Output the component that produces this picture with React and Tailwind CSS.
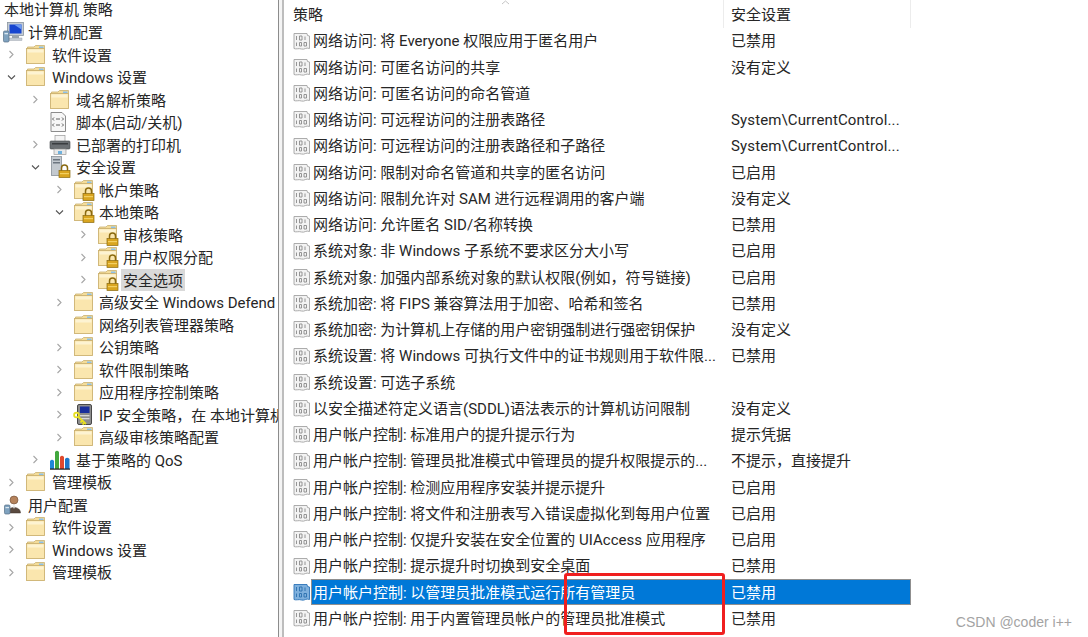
import React from "react";

function Chevron({ open }) {
  return (
    <svg width="9" height="9" viewBox="0 0 9 9" className="shrink-0" fill="none" stroke={open ? "#555" : "#a6a6a6"} strokeWidth="1.1">
      {open ? <path d="M1 2.5 L4.5 6 L8 2.5" /> : <path d="M2.5 1 L6 4.5 L2.5 8" />}
    </svg>
  );
}

function Folder({ lock }) {
  return (
    <svg width="22" height="22" viewBox="0 0 22 22" className="shrink-0 overflow-visible">
      <path d="M2.5 5 V3 H9 L10.5 1.5 H19.5 V5 Z" fill="#f3dc9a" stroke="#c9b070" strokeWidth="0.8" />
      <rect x="14" y="2.5" width="4.5" height="2" fill="#8cc0e8" />
      <rect x="1.5" y="4.5" width="18" height="15" fill="#fae6ae" stroke="#cdb271" strokeWidth="0.9" />
      <rect x="2.5" y="5.5" width="16" height="3" fill="#fdf3d2" />
      {lock && <Lock />}
    </svg>
  );
}

function Lock() {
  return (
    <g>
      <path d="M12.5 15 V12 A3 3 0 0 1 18.5 12 V15" fill="none" stroke="#8a6a10" strokeWidth="1.5" />
      <rect x="10" y="14.5" width="11" height="7" fill="#d9a520" stroke="#8a6a10" strokeWidth="0.7" />
      <rect x="11" y="17" width="9" height="1.2" fill="#f3d062" />
    </g>
  );
}

function Computer() {
  return (
    <svg width="24" height="22" viewBox="0 0 24 22" className="shrink-0">
      <rect x="6.5" y="1.5" width="16" height="13" fill="#c4ccd4" stroke="#8a95a0" strokeWidth="0.8" />
      <rect x="8.5" y="3.5" width="12" height="9" fill="#1746d0" />
      <path d="M13 3.5 L20.5 3.5 L20.5 8.5 Z" fill="#6f9bf0" />
      <rect x="11" y="14.5" width="7" height="2.5" fill="#9aa4ae" />
      <rect x="8" y="17" width="13" height="2.5" fill="#c5ccd4" stroke="#8f99a3" strokeWidth="0.4" />
      <rect x="2.5" y="10" width="5.5" height="11" rx="1.2" fill="#7fa2bf" stroke="#566f85" strokeWidth="0.7" />
      <rect x="3.5" y="12" width="3.5" height="1.3" fill="#dbe7f0" />
    </svg>
  );
}

function UserIcon() {
  return (
    <svg width="24" height="22" viewBox="0 0 24 22" className="shrink-0">
      <circle cx="13" cy="6" r="4" fill="#b5835c" stroke="#6b4a32" strokeWidth="0.6" />
      <path d="M6.5 19 C6.5 11.5 19.5 11.5 19.5 19 Z" fill="#5a4a3f" stroke="#3e322a" strokeWidth="0.5" />
      <path d="M11.5 11.5 L13 15 L14.5 11.5 Z" fill="#e8e8e8" />
      <rect x="3.5" y="11" width="5.5" height="9" rx="1.2" fill="#7fa2bf" stroke="#566f85" strokeWidth="0.7" />
      <rect x="4.5" y="13" width="3.5" height="1.2" fill="#dbe7f0" />
    </svg>
  );
}

function Script() {
  return (
    <svg width="18" height="22" viewBox="0 0 18 22" className="shrink-0">
      <path d="M2 1.5 H13 L16.5 5 V20.5 H2 Z" fill="#f7f7f7" stroke="#8d8d8d" strokeWidth="1" />
      <path d="M5 6.5 L3.5 8 L5 9.5 M7 8 H11 M13 6.5 L14.5 8 L13 9.5 M5 12.5 L3.5 14 L5 15.5 M7 14 H11 M13 12.5 L14.5 14 L13 15.5" stroke="#5f5f5f" strokeWidth="1" fill="none" />
    </svg>
  );
}

function Printer() {
  return (
    <svg width="22" height="22" viewBox="0 0 22 22" className="shrink-0">
      <rect x="6" y="1.5" width="10" height="6" fill="#f4f4f4" stroke="#999" strokeWidth="0.7" />
      <rect x="1" y="7" width="20" height="8" rx="1" fill="#6b6f73" stroke="#45484b" strokeWidth="0.6" />
      <rect x="3" y="9" width="16" height="1.5" fill="#3a3d40" />
      <rect x="5" y="15" width="12" height="5.5" fill="#e8e8e8" stroke="#999" strokeWidth="0.7" />
      <rect x="9" y="17" width="4" height="3" fill="#6fb1dd" />
    </svg>
  );
}

function Security() {
  return (
    <svg width="22" height="22" viewBox="0 0 22 22" className="shrink-0">
      <rect x="2.5" y="0.5" width="10" height="19" fill="#c3c9cf" stroke="#7c858e" strokeWidth="0.7" />
      <rect x="4" y="3" width="7" height="1.5" fill="#6d7680" />
      <rect x="4" y="6" width="7" height="1.5" fill="#6d7680" />
      <Lock />
    </svg>
  );
}

function IpKey() {
  return (
    <svg width="22" height="22" viewBox="0 0 22 22" className="shrink-0 overflow-visible">
      <rect x="4.5" y="0.5" width="14" height="20" rx="1.5" fill="#8d8d8d" stroke="#3a3a3a" strokeWidth="0.9" />
      <rect x="7" y="2.5" width="9.5" height="6.5" fill="#1a2f9c" />
      <rect x="7" y="11" width="9.5" height="1.3" fill="#d8d8d8" />
      <rect x="7" y="14" width="9.5" height="1.3" fill="#d8d8d8" />
      <circle cx="3.5" cy="11" r="2.4" fill="none" stroke="#e8e020" strokeWidth="1.8" />
      <path d="M5 12.5 L13 20 M9.5 16.5 L7.5 18.5 M11.5 18.5 L9.5 20.5" stroke="#e8e020" strokeWidth="1.8" fill="none" />
    </svg>
  );
}

function Qos() {
  return (
    <svg width="22" height="22" viewBox="0 0 22 22" className="shrink-0">
      <path d="M1 20 V12 Q3 9.5 5 12 V20 Z" fill="#1e88d8" />
      <path d="M6 20 V3 Q8 0.5 10 3 V20 Z" fill="#42a83e" />
      <path d="M11 20 V8 Q13 5.5 15 8 V20 Z" fill="#e0492c" />
      <path d="M16 20 V10 Q18 7.5 20.5 10 V20 Z" fill="#1e78c8" />
      <rect x="1" y="19.5" width="20" height="1.2" fill="#1d1d1d" />
    </svg>
  );
}

function PolicyIcon({ selected }) {
  const edge = selected ? "#2d74b8" : "#a3a3a3";
  const ink = selected ? "#2a6fae" : "#8a8a8a";
  const fill = selected ? "#7eb0dd" : "#f3f3f3";
  return (
    <svg width="18" height="19" viewBox="0 0 18 19" className="shrink-0">
      <path d="M1 1.5 H14 L14.5 3.5 L16.5 4 V16.5 C13 15 11.5 18 8.5 17 C6 16 3 17.5 1 16.5 Z" fill={fill} stroke={edge} strokeWidth="0.9" />
      <path d="M3.5 4 V8 M6.5 4 H9 V8 H6.5 Z M3.5 10.5 V14 M6.5 10.5 H8.5 V14 H6.5 Z M11 10.5 H13.5 V14 H11 Z M12 4.5 V8" stroke={ink} strokeWidth="0.9" fill="none" />
    </svg>
  );
}

const tree = [
  { d: 0, t: "计算机配置", icon: <Computer /> },
  { d: 1, t: "软件设置", c: "r", icon: <Folder /> },
  { d: 1, t: "Windows 设置", c: "o", icon: <Folder /> },
  { d: 2, t: "域名解析策略", c: "r", icon: <Folder /> },
  { d: 2, t: "脚本(启动/关机)", icon: <Script /> },
  { d: 2, t: "已部署的打印机", c: "r", icon: <Printer /> },
  { d: 2, t: "安全设置", c: "o", icon: <Security /> },
  { d: 3, t: "帐户策略", c: "r", icon: <Folder lock /> },
  { d: 3, t: "本地策略", c: "o", icon: <Folder lock /> },
  { d: 4, t: "审核策略", c: "r", icon: <Folder lock /> },
  { d: 4, t: "用户权限分配", c: "r", icon: <Folder lock /> },
  { d: 4, t: "安全选项", c: "r", icon: <Folder lock />, sel: true },
  { d: 3, t: "高级安全 Windows Defend", c: "r", icon: <Folder /> },
  { d: 3, t: "网络列表管理器策略", icon: <Folder /> },
  { d: 3, t: "公钥策略", c: "r", icon: <Folder /> },
  { d: 3, t: "软件限制策略", c: "r", icon: <Folder /> },
  { d: 3, t: "应用程序控制策略", c: "r", icon: <Folder /> },
  { d: 3, t: "IP 安全策略，在 本地计算机", c: "r", icon: <IpKey /> },
  { d: 3, t: "高级审核策略配置", c: "r", icon: <Folder /> },
  { d: 2, t: "基于策略的 QoS", c: "r", icon: <Qos /> },
  { d: 1, t: "管理模板", c: "r", icon: <Folder /> },
  { d: 0, t: "用户配置", icon: <UserIcon /> },
  { d: 1, t: "软件设置", c: "r", icon: <Folder /> },
  { d: 1, t: "Windows 设置", c: "r", icon: <Folder /> },
  { d: 1, t: "管理模板", c: "r", icon: <Folder /> },
];

const rows = [
  ["网络访问: 将 Everyone 权限应用于匿名用户", "已禁用"],
  ["网络访问: 可匿名访问的共享", "没有定义"],
  ["网络访问: 可匿名访问的命名管道", ""],
  ["网络访问: 可远程访问的注册表路径", "System\\CurrentControl..."],
  ["网络访问: 可远程访问的注册表路径和子路径", "System\\CurrentControl..."],
  ["网络访问: 限制对命名管道和共享的匿名访问", "已启用"],
  ["网络访问: 限制允许对 SAM 进行远程调用的客户端", "没有定义"],
  ["网络访问: 允许匿名 SID/名称转换", "已禁用"],
  ["系统对象: 非 Windows 子系统不要求区分大小写", "已启用"],
  ["系统对象: 加强内部系统对象的默认权限(例如，符号链接)", "已启用"],
  ["系统加密: 将 FIPS 兼容算法用于加密、哈希和签名", "已禁用"],
  ["系统加密: 为计算机上存储的用户密钥强制进行强密钥保护", "没有定义"],
  ["系统设置: 将 Windows 可执行文件中的证书规则用于软件限...", "已禁用"],
  ["系统设置: 可选子系统", ""],
  ["以安全描述符定义语言(SDDL)语法表示的计算机访问限制", "没有定义"],
  ["用户帐户控制: 标准用户的提升提示行为", "提示凭据"],
  ["用户帐户控制: 管理员批准模式中管理员的提升权限提示的...", "不提示，直接提升"],
  ["用户帐户控制: 检测应用程序安装并提示提升", "已启用"],
  ["用户帐户控制: 将文件和注册表写入错误虚拟化到每用户位置", "已启用"],
  ["用户帐户控制: 仅提升安装在安全位置的 UIAccess 应用程序", "已启用"],
  ["用户帐户控制: 提示提升时切换到安全桌面", "已禁用"],
  ["用户帐户控制: 以管理员批准模式运行所有管理员", "已禁用", true],
  ["用户帐户控制: 用于内置管理员帐户的管理员批准模式", "已禁用"],
];

const indent = ["pl-[1px]", "pl-[4px]", "pl-[28px]", "pl-[52px]", "pl-[76px]"];

function TreeRow({ r }) {
  return (
    <div className={`flex items-center h-[22.5px] whitespace-nowrap ${indent[r.d]}`}>
      {r.d > 0 && (
        <span className="w-[16px] ml-[3px] mr-[2px] shrink-0 flex items-center">
          {r.c && <Chevron open={r.c === "o"} />}
        </span>
      )}
      <span className="w-[24px] shrink-0 flex items-center">{r.icon}</span>
      <span className={`px-[2px] pt-[2px] leading-[20px] ${r.d > 2 ? "" : "ml-[1px]"} ${r.sel ? "bg-[#d9d9d9]" : ""}`}>{r.t}</span>
    </div>
  );
}

export default function App() {
  return (
    <div
      className="relative w-[1088px] h-[637px] overflow-hidden bg-white flex text-[15px] text-[#262626]"
      style={{ fontFamily: 'Roboto, "Noto Sans CJK SC", sans-serif' }}
    >
      <div className="w-[279px] shrink-0 overflow-hidden border-r border-[#8c8c8c]">
        <div className="h-[21px] pl-[4px] leading-[21px]">本地计算机 策略</div>
        {tree.map((r, i) => (
          <TreeRow key={i} r={r} />
        ))}
      </div>
      <div className="w-[5px] shrink-0 bg-[#f4f4f4] border-r-2 border-[#bdbdbd]" />
      <div className="w-[628px] shrink-0 relative">
        <div className="flex h-[28px] leading-[30px]">
          <div className="w-[440px] pl-[9px] border-r border-[#ececec]">策略</div>
          <div className="w-[187px] pl-[7px] border-r border-[#ececec]">安全设置</div>
        </div>
        <div className="flex flex-col">
          {rows.map(([a, b, sel], i) => (
            <div key={i} className="flex h-[26.25px] items-center whitespace-nowrap">
              <div className="w-[27px] shrink-0 pl-[9px] flex items-center">
                <PolicyIcon selected={sel} />
              </div>
              <div
                className={`flex w-[600px] h-[26px] items-center pt-[1px] ${
                  sel ? "bg-[#0078d7] text-white border border-[#8f8f8f]" : "border border-transparent"
                }`}
              >
                <div className="w-[412px] shrink-0 pl-[1px]">{a}</div>
                <div className={b.startsWith("System") ? "pl-[7px] tracking-[0.13px]" : "pl-[7px]"}>{b}</div>
              </div>
            </div>
          ))}
        </div>
        <svg width="9" height="5" viewBox="0 0 9 5" className="absolute left-[217px] top-0" fill="none" stroke="#b5b5b5" strokeWidth="0.8">
          <path d="M1 4 L4.5 1 L8 4" />
        </svg>
      </div>
      <div className="absolute left-[564px] top-[573px] w-[161px] h-[62px] border-[3px] border-[#f01f1f] rounded-[3px]" />
      <div
        className="absolute right-[16px] top-[614px] text-[14px] leading-[16px] text-[#a3a3a3]"
        style={{ fontFamily: '"Liberation Sans", sans-serif' }}
      >
        CSDN @coder i++
      </div>
    </div>
  );
}
